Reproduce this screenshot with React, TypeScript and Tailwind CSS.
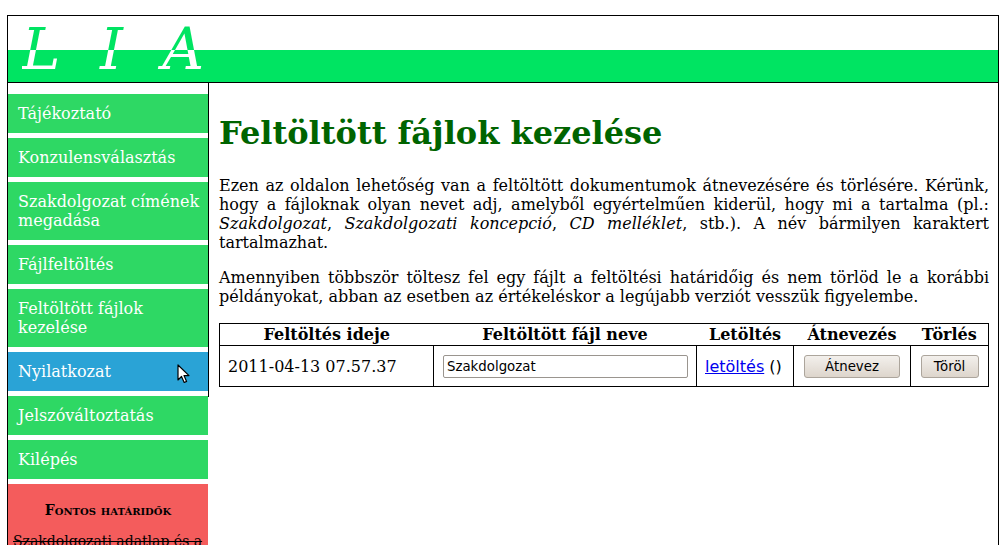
const menu = [
  { label: "Tájékoztató" },
  { label: "Konzulensválasztás" },
  { label: "Szakdolgozat címének megadása" },
  { label: "Fájlfeltöltés" },
  { label: "Feltöltött fájlok kezelése" },
  { label: "Nyilatkozat", active: true },
  { label: "Jelszóváltoztatás" },
  { label: "Kilépés" },
];

function Cursor() {
  return (
    <svg
      className="absolute left-[169px] top-[12px]"
      width="14"
      height="20"
      viewBox="0 0 14 20"
    >
      <path
        d="M1 1 L1 16 L4.5 12.5 L7.2 18.5 L9.6 17.4 L7 11.6 L12 11.6 Z"
        fill="#fff"
        stroke="#000"
        strokeWidth="1.2"
        strokeLinejoin="round"
      />
    </svg>
  );
}

export default function App() {
  return (
    <div className="min-h-[545px] bg-white pt-[15px] font-['DejaVu_Serif',serif] text-[16px] leading-[19px] text-black">
      <div className="ml-[7px] w-[992px] border border-black">
        {/* Header */}
        <div className="h-[67px] border-b border-black bg-[linear-gradient(to_bottom,#ffffff_34px,#00e462_34px)] pl-[14px]">
          <h1 className="bg-[linear-gradient(to_bottom,#00e462_34px,#ffffff_34px)] bg-clip-text text-[58px] leading-[66px] font-normal italic tracking-[10.5px] text-transparent">
            L I A
          </h1>
        </div>

        <div className="flex items-start">
          {/* Sidebar */}
          <div className="w-[200px] shrink-0 pt-[11px]">
            {menu.map((m) => (
              <div
                key={m.label}
                className={`relative mb-[5px] py-[10px] pr-[2px] pl-[10px] text-white ${
                  m.active ? "bg-[#2aa3d6]" : "bg-[#2ed864]"
                }`}
              >
                {m.label}
                {m.active && <Cursor />}
              </div>
            ))}
            <div className="h-[80px] bg-[#f45c5c] px-[5px] pt-[18px]">
              <h3 className="text-center text-[14px] leading-[17px] font-bold [font-variant:small-caps]">
                Fontos határidők
              </h3>
              <p className="mt-[13px] text-[14px] line-through">
                Szakdolgozati adatlap és a
              </p>
            </div>
          </div>

          {/* Content */}
          <div className="flex-1 border-l border-black px-[10px] pt-[32px] pb-[10px]">
            <h2 className="text-[32px] leading-[37px] font-bold text-[#006400]">
              Feltöltött fájlok kezelése
            </h2>
            <p className="mt-[24px] text-justify">
              Ezen az oldalon lehetőség van a feltöltött dokumentumok
              átnevezésére és törlésére. Kérünk, hogy a fájloknak olyan nevet
              adj, amelyből egyértelműen kiderül, hogy mi a tartalma (pl.:{" "}
              <i>Szakdolgozat</i>, <i>Szakdolgozati koncepció</i>,{" "}
              <i>CD melléklet</i>, stb.). A név bármilyen karaktert
              tartalmazhat.
            </p>
            <p className="mt-[16px] text-justify">
              Amennyiben többször töltesz fel egy fájlt a feltöltési
              határidőig és nem törlöd le a korábbi példányokat, abban az
              esetben az értékeléskor a legújabb verziót vesszük figyelembe.
            </p>

            <table className="mt-[17px] w-[769px] table-fixed border-collapse border border-black">
              <colgroup>
                <col className="w-[214px]" />
                <col className="w-[263px]" />
                <col className="w-[97px]" />
                <col className="w-[117px]" />
                <col className="w-[78px]" />
              </colgroup>
              <thead>
                <tr className="border-b border-black">
                  <th className="h-[22px] p-0 text-center font-bold">Feltöltés ideje</th>
                  <th className="p-0 text-center font-bold">Feltöltött fájl neve</th>
                  <th className="p-0 text-center font-bold">Letöltés</th>
                  <th className="p-0 text-center font-bold">Átnevezés</th>
                  <th className="p-0 text-center font-bold">Törlés</th>
                </tr>
              </thead>
              <tbody>
                <tr>
                  <td className="h-[41px] border-r border-black pl-[8px]">2011-04-13 07.57.37</td>
                  <td className="border-r border-black pl-[9px] pr-[8px]">
                    <input
                      defaultValue="Szakdolgozat"
                      className="h-[23px] w-[245px] rounded-[2px] border border-[#9a958f] bg-white px-[3px] font-['DejaVu_Sans',sans-serif] text-[13.33px] text-black"
                    />
                  </td>
                  <td className="border-r border-black pl-[8px] font-['DejaVu_Sans',sans-serif]">
                    <a href="#" className="text-[#0000ee] underline">
                      letöltés
                    </a>{" "}
                    ()
                  </td>
                  <td className="border-r border-black text-center">
                    <button className="h-[23px] w-[96px] rounded-[3px] border border-[#aca59c] bg-[linear-gradient(to_bottom,#f3f0ec,#ddd5cc)] font-['DejaVu_Sans',sans-serif] text-[13.33px] text-black">
                      Átnevez
                    </button>
                  </td>
                  <td className="text-center">
                    <button className="h-[23px] w-[58px] rounded-[3px] border border-[#aca59c] bg-[linear-gradient(to_bottom,#f3f0ec,#ddd5cc)] font-['DejaVu_Sans',sans-serif] text-[13.33px] text-black">
                      Töröl
                    </button>
                  </td>
                </tr>
              </tbody>
            </table>
          </div>
        </div>
      </div>
    </div>
  );
}
